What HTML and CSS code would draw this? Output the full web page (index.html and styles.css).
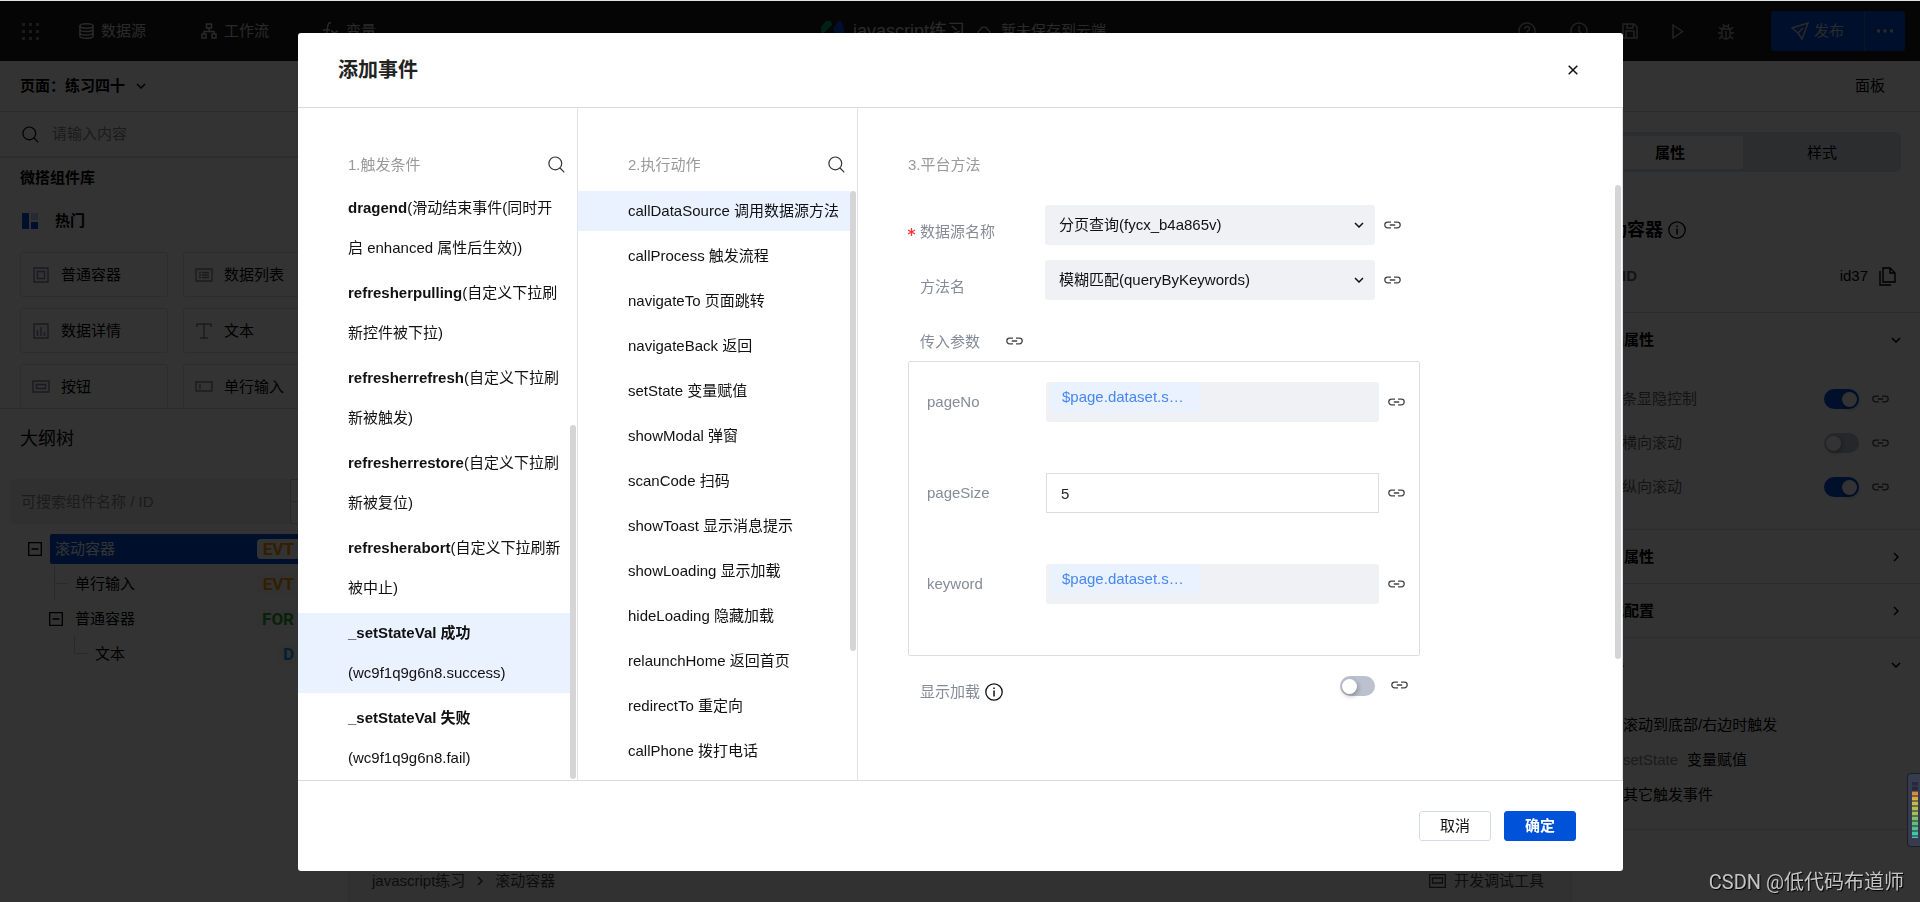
FILE: index.html
```html
<!DOCTYPE html>
<html lang="zh-CN">
<head>
<meta charset="utf-8">
<title>添加事件</title>
<link rel="stylesheet" href="styles.css">
</head>
<body>
<svg class="sprite" aria-hidden="true">
  <symbol id="link" viewBox="0 0 17 8"><path d="M7 1.200H3.600a2.800 2.800 0 0 0 0 5.600H7M10 1.200h3.400a2.800 2.800 0 0 1 0 5.600H10M5.800 4h5.400" fill="none" stroke="currentColor" stroke-width="1.300"/></symbol>
  <symbol id="search" viewBox="0 0 17 17"><path d="M7.3 1a6.4 6.4 0 1 0 0 12.800a6.4 6.4 0 0 0 0-12.800M12 12l4.300 4.300" fill="none" stroke="currentColor" stroke-width="1.2"/></symbol>
  <symbol id="down" viewBox="0 0 10 6"><path d="M1 1l4 4 4-4" fill="none" stroke="currentColor" stroke-width="1.5"/></symbol>
  <symbol id="right" viewBox="0 0 6 10"><path d="M1 1l4 4-4 4" fill="none" stroke="currentColor" stroke-width="1.5"/></symbol>
  <symbol id="info" viewBox="0 0 18 18"><circle cx="9" cy="9" r="8.200" fill="none" stroke="currentColor" stroke-width="1.300"/><path d="M8.300 4.500h1.500v1.500H8.300zM8.300 7.500h1.500v6H8.300z" fill="currentColor"/></symbol>
  <symbol id="minus" viewBox="0 0 14 14"><path d="M.7.7h12.600v12.600H.7zM3.500 7h7" fill="none" stroke="currentColor" stroke-width="1.300"/></symbol>
</svg>

<div class="app">
  <header class="topbar">
    <nav class="topnav">
      <a href="#" class="apps" aria-label="应用"><svg width="17" height="17" viewBox="0 0 17 17"><path d="M0 0h3v3H0zM7 0h3v3H7zM14 0h3v3h-3zM0 7h3v3H0zM7 7h3v3H7zM14 7h3v3h-3zM0 14h3v3H0zM7 14h3v3H7zM14 14h3v3h-3z" fill="currentColor"/></svg></a>
      <a href="#" class="nav-data"><svg width="15" height="16" viewBox="0 0 15 16"><g fill="none" stroke="currentColor" stroke-width="1.500"><ellipse cx="7.500" cy="3" rx="6.600" ry="2.200"/><path d="M.9 3v10c0 3 13.200 3 13.200 0V3M.9 6.300c0 3 13.200 3 13.200 0M.9 9.700c0 3 13.200 3 13.200 0"/></g></svg>数据源</a>
      <a href="#" class="nav-flow"><svg width="16" height="16" viewBox="0 0 16 16"><path d="M5.500 1h5v4h-5zM1 11h4v4H1zM11 11h4v4h-4zM8 5v3.500M3 11V8.500h10V11" fill="none" stroke="currentColor" stroke-width="1.500"/></svg>工作流</a>
      <a href="#" class="nav-var"><svg width="16" height="18" viewBox="0 0 16 18"><path d="M8 1C5 0 5 3 4.500 6S4 16 1 16M0 8h7M8 9c4 0 3 6 7 6M15 9c-3 0-4 6-7 6" fill="none" stroke="currentColor" stroke-width="1.400"/></svg>变量</a>
    </nav>
    <div class="project">
      <svg class="logo" width="23" height="20" viewBox="0 0 23 20"><path d="M0 6l5-6h5l1 4-9 9H0z" fill="#00a870"/><path d="M12 8l5-8h3l3 7v11h-5z" fill="#0052d9"/></svg>
      <span class="project-name">javascript练习</span>
      <svg width="16" height="12" viewBox="0 0 16 12"><path d="M4 11a3.200 3.200 0 0 1 0-6 4.200 4.200 0 0 1 8 0 3.200 3.200 0 0 1 0 6z" fill="none" stroke="currentColor" stroke-width="1.300"/></svg>
      <span>暂未保存到云端</span>
    </div>
    <div class="tools">
      <button aria-label="帮助"><svg width="18" height="18" viewBox="0 0 18 18"><circle cx="9" cy="9" r="8" fill="none" stroke="currentColor" stroke-width="1.400"/><path d="M6.500 7c0-3.300 5-3.300 5 0 0 1.600-2.500 1.600-2.500 3.500M9 12v1.500" fill="none" stroke="currentColor" stroke-width="1.400"/></svg></button>
      <button aria-label="历史"><svg width="18" height="18" viewBox="0 0 18 18"><circle cx="9" cy="9" r="8" fill="none" stroke="currentColor" stroke-width="1.400"/><path d="M9 4v5l3 3" fill="none" stroke="currentColor" stroke-width="1.400"/></svg></button>
      <button aria-label="保存"><svg width="16" height="16" viewBox="0 0 16 16"><path d="M1 1h11l3 3v11H1zM4 15V8h8v7M5 1v4h6V1" fill="none" stroke="currentColor" stroke-width="1.500"/></svg></button>
      <button aria-label="预览"><svg width="12" height="15" viewBox="0 0 12 15"><path d="M1 1l9.500 6.500L1 14z" fill="none" stroke="currentColor" stroke-width="1.500"/></svg></button>
      <button aria-label="调试"><svg width="16" height="17" viewBox="0 0 16 17"><path d="M4 6h8v6a4 4 0 0 1-8 0zM5 6a3 3 0 0 1 6 0M8 8v8M0 10h4M12 10h4M1 4l3 3M15 4l-3 3M1 16l3-3M15 16l-3-3M5 1l1 2M11 1l-1 2" fill="none" stroke="currentColor" stroke-width="1.400"/></svg></button>
      <div class="publish">
        <button class="publish-main"><svg width="18" height="18" viewBox="0 0 18 18"><path d="M1 6l16-5-6 16-4-6zM7 11l5-5" fill="none" stroke="currentColor" stroke-width="1.400"/></svg>发布</button>
        <button class="publish-more" aria-label="更多"><svg width="16" height="4" viewBox="0 0 16 4"><path d="M0 .5h3v3H0zM6.500.5h3v3h-3zM13 .5h3v3h-3z" fill="currentColor"/></svg></button>
      </div>
    </div>
  </header>

  <div class="workspace">
    <aside class="left">
      <button class="page-switch">页面：练习四十<svg width="10" height="6"><use href="#down"/></svg></button>
      <label class="lib-search"><svg width="17" height="17"><use href="#search"/></svg><input type="text" placeholder="请输入内容" aria-label="搜索组件"></label>
      <section class="library">
        <h2>微搭组件库</h2>
        <h3><svg width="16" height="16" viewBox="0 0 16 16"><path d="M0 0h7v16H0zM9 9h7v7H9z" fill="#0052d9"/><path d="M9 0h7v7H9z" fill="#bccdf5"/></svg>热门</h3>
        <div class="cards">
          <button><svg width="18" height="16" viewBox="0 0 18 16"><path d="M2 1h14v14H2zM5.500 4.500h7v7h-7z" fill="none" stroke="currentColor" stroke-width="1.400"/></svg>普通容器</button>
          <button><svg width="18" height="14" viewBox="0 0 18 14"><path d="M1 1h16v12H1zM4 4.500h2M7 4.500h7M4 7h2M7 7h7M4 9.500h2M7 9.500h7" fill="none" stroke="currentColor" stroke-width="1.300"/></svg>数据列表</button>
          <button><svg width="18" height="16" viewBox="0 0 18 16"><path d="M2 1h14v14H2zM5.500 7v6M9 4v9M12.500 9v4" fill="none" stroke="currentColor" stroke-width="1.400"/></svg>数据详情</button>
          <button><svg width="18" height="16" viewBox="0 0 18 16"><path d="M2 4V1h14v3M9 1v14M5 15h8" fill="none" stroke="currentColor" stroke-width="1.400"/></svg>文本</button>
          <button><svg width="18" height="13" viewBox="0 0 18 13"><path d="M1 1h16v11H1zM4.500 4.500h9v4h-9z" fill="none" stroke="currentColor" stroke-width="1.400"/></svg>按钮</button>
          <button><svg width="18" height="11" viewBox="0 0 18 11"><path d="M1 1h16v9H1zM5 3v5" fill="none" stroke="currentColor" stroke-width="1.400"/></svg>单行输入</button>
        </div>
      </section>
      <section class="outline">
        <h2>大纲树</h2>
        <div class="outline-search"><input type="text" placeholder="可搜索组件名称 / ID" aria-label="搜索大纲"><span class="stepper"><button aria-label="上一个"></button><button aria-label="下一个"></button></span></div>
        <ul class="tree">
          <li class="lv1"><svg width="14" height="14"><use href="#minus"/></svg><span class="node active">滚动容器<b class="tag evt">EVT</b></span></li>
          <li class="lv2"><i class="branch through"></i><span class="node">单行输入<b class="tag evt">EVT</b></span></li>
          <li class="lv2 open"><svg width="14" height="14"><use href="#minus"/></svg><span class="node">普通容器<b class="tag for">FOR</b></span></li>
          <li class="lv3"><i class="branch"></i><span class="node">文本<b class="tag d">D</b></span></li>
        </ul>
      </section>
    </aside>

    <main class="canvas">
      <div class="canvas-bar"></div>
      <footer class="crumbs">
        <a href="#">javascript练习</a><svg width="6" height="10"><use href="#right"/></svg><a href="#">滚动容器</a>
        <button class="devtools"><svg width="17" height="14" viewBox="0 0 17 14"><path d="M.7.7h15.600v12.600H.7zM3.500 4h10v5h-10z" fill="none" stroke="currentColor" stroke-width="1.300"/></svg>开发调试工具</button>
      </footer>
    </main>

    <aside class="right">
      <div class="panel-bar"><button>面板</button></div>
      <div class="tabs"><button class="on">属性</button><button>样式</button></div>
      <h2>滚动容器<svg width="18" height="18"><use href="#info"/></svg></h2>
      <div class="idrow"><b>组件ID</b><span>id37</span><svg width="17" height="19" viewBox="0 0 17 19"><path d="M4 1h7l5 5v9H4zM11 1v5h5M1 4v14h11" fill="none" stroke="currentColor" stroke-width="1.400"/></svg></div>
      <section class="props">
        <h3>基础属性<svg width="10" height="6"><use href="#down"/></svg></h3>
        <div class="prop"><label for="p1">滚动条显隐控制</label><input id="p1" class="switch" type="checkbox" checked><svg width="17" height="8"><use href="#link"/></svg></div>
        <div class="prop"><label for="p2">允许横向滚动</label><input id="p2" class="switch" type="checkbox"><svg width="17" height="8"><use href="#link"/></svg></div>
        <div class="prop"><label for="p3">允许纵向滚动</label><input id="p3" class="switch" type="checkbox" checked><svg width="17" height="8"><use href="#link"/></svg></div>
      </section>
      <section><h3>通用属性<svg width="6" height="10"><use href="#right"/></svg></h3></section>
      <section><h3>样式配置<svg width="6" height="10"><use href="#right"/></svg></h3></section>
      <section class="events">
        <h3>事件<svg width="10" height="6"><use href="#down"/></svg></h3>
        <p>滚动到底部/右边时触发</p>
        <p><span>setState</span>变量赋值</p>
        <p>其它触发事件</p>
      </section>
    </aside>
  </div>
</div>

<div class="overlay">
  <div class="modal" role="dialog" aria-labelledby="title">
    <header class="modal-head">
      <h1 id="title">添加事件</h1>
      <button class="close" aria-label="关闭"><svg width="10" height="10" viewBox="0 0 10 10"><path d="M.7.7l8.600 8.600M9.300.7L.7 9.300" stroke="currentColor" stroke-width="1.500"/></svg></button>
    </header>
    <div class="modal-body">
      <section class="col triggers">
        <h2>1.触发条件<button aria-label="搜索"><svg width="17" height="17"><use href="#search"/></svg></button></h2>
        <ul>
          <li><b>dragend</b>(滑动结束事件(同时开启 enhanced 属性后生效))</li>
          <li><b>refresherpulling</b>(自定义下拉刷新控件被下拉)</li>
          <li><b>refresherrefresh</b>(自定义下拉刷新被触发)</li>
          <li><b>refresherrestore</b>(自定义下拉刷新被复位)</li>
          <li><b>refresherabort</b>(自定义下拉刷新被中止)</li>
          <li class="sel"><b>_setStateVal 成功</b><br>(wc9f1q9g6n8.success)</li>
          <li><b>_setStateVal 失败</b><br>(wc9f1q9g6n8.fail)</li>
        </ul>
        <i class="thumb"></i>
      </section>
      <section class="col actions">
        <h2>2.执行动作<button aria-label="搜索"><svg width="17" height="17"><use href="#search"/></svg></button></h2>
        <ul>
          <li class="sel">callDataSource 调用数据源方法</li>
          <li>callProcess 触发流程</li>
          <li>navigateTo 页面跳转</li>
          <li>navigateBack 返回</li>
          <li>setState 变量赋值</li>
          <li>showModal 弹窗</li>
          <li>scanCode 扫码</li>
          <li>showToast 显示消息提示</li>
          <li>showLoading 显示加载</li>
          <li>hideLoading 隐藏加载</li>
          <li>relaunchHome 返回首页</li>
          <li>redirectTo 重定向</li>
          <li>callPhone 拨打电话</li>
        </ul>
        <i class="thumb"></i>
      </section>
      <section class="col method">
        <h2>3.平台方法</h2>
        <form>
          <div class="row">
            <label class="req" for="source"><svg width="7" height="8" viewBox="0 0 7 8"><path d="M3.500 0v8M0 2l7 4M7 2L0 6" stroke="currentColor" stroke-width="1.200"/></svg>数据源名称</label>
            <span class="select"><select id="source"><option>分页查询(fycx_b4a865v)</option></select><svg width="10" height="6"><use href="#down"/></svg></span>
            <svg class="bind" width="17" height="8"><use href="#link"/></svg>
          </div>
          <div class="row">
            <label for="method">方法名</label>
            <span class="select"><select id="method"><option>模糊匹配(queryByKeywords)</option></select><svg width="10" height="6"><use href="#down"/></svg></span>
            <svg class="bind" width="17" height="8"><use href="#link"/></svg>
          </div>
          <div class="row params-head"><span class="label">传入参数</span><svg width="17" height="8"><use href="#link"/></svg></div>
          <div class="params">
            <div class="param"><span>pageNo</span><div class="bound"><a href="#">$page.dataset.s…</a></div><svg width="17" height="8"><use href="#link"/></svg></div>
            <div class="param"><label for="size">pageSize</label><input id="size" type="text" value="5"><svg width="17" height="8"><use href="#link"/></svg></div>
            <div class="param"><span>keyword</span><div class="bound"><a href="#">$page.dataset.s…</a></div><svg width="17" height="8"><use href="#link"/></svg></div>
          </div>
          <div class="row loading"><label for="load">显示加载<svg width="18" height="18"><use href="#info"/></svg></label><input id="load" class="switch" type="checkbox"><svg class="bind" width="17" height="8"><use href="#link"/></svg></div>
        </form>
        <i class="thumb"></i>
      </section>
    </div>
    <footer class="modal-foot"><button>取消</button><button class="primary">确定</button></footer>
  </div>
</div>
<div class="meter"><i></i></div>
<div class="watermark">CSDN @低代码布道师</div>
</body>
</html>
```

FILE: styles.css
```css
* { box-sizing: border-box; }
html, body { height: 100%; }
body {
  margin: 0;
  overflow: hidden;
  background: #fff;
  color: #000;
  font: 15px/20px "Liberation Sans", "Noto Sans CJK SC", sans-serif;
}
h1, h2, h3, p, ul { margin: 0; padding: 0; font-size: 15px; }
ul { list-style: none; }
a { color: inherit; text-decoration: none; }
button, input, select { font: inherit; color: inherit; border: 0; background: none; padding: 0; margin: 0; }
svg { flex: none; display: block; }
.sprite { position: absolute; width: 0; height: 0; }

.app { height: 100%; display: flex; flex-direction: column; border-top: 1px solid #dfe3e1; }

/* top bar */
.topbar { height: 60px; flex: none; display: flex; align-items: center; background: #191919; color: #d0d0d0; padding: 0 15px 0 22px; }
.topnav { display: flex; align-items: center; flex: 1 1 0; }
.topnav a { display: flex; align-items: center; gap: 7px; }
.topnav .apps { color: #888; margin-right: 40px; }
.topnav .nav-data { margin-right: 55px; }
.topnav .nav-flow { margin-right: 54px; }
.project { display: flex; align-items: center; gap: 9px; }
.project-name { font-size: 18px; margin-right: 2px; }
.tools { flex: 1 1 0; display: flex; align-items: center; justify-content: flex-end; gap: 34px; color: #aaa; }
.publish { display: flex; height: 40px; background: #0052d9; border-radius: 3px; margin-left: 3px; color: #d0d0d0; }
.publish-main { width: 94px; display: flex; align-items: center; justify-content: center; gap: 5px; border-right: 1px solid #2b6de0; }
.publish-more { width: 40px; display: flex; align-items: center; justify-content: center; }

.workspace { flex: 1; min-height: 0; display: flex; }

/* left panel */
.left { width: 349px; flex: none; border-right: 1px solid #e7e7e7; display: flex; flex-direction: column; }
.page-switch { height: 51px; border-bottom: 1px solid #ddd; padding: 0 20px; display: flex; align-items: center; gap: 11px; font-weight: bold; }
.lib-search { height: 46px; border-bottom: 2px solid #e0e0e0; display: flex; align-items: center; gap: 13px; padding: 0 22px; }
.lib-search input { flex: 1; }
input::placeholder { color: #888; opacity: 1; }
.library { height: 251px; overflow: hidden; padding: 10px 16px 0 20px; border-bottom: 1px solid #ddd; }
.library h2 { line-height: 20px; }
.library h3 { display: flex; align-items: center; gap: 17px; margin: 23px 0 21px 2px; }
.cards { display: grid; grid-template-columns: 148px 148px; gap: 11px 15px; }
.cards button { height: 45px; border: 1px solid #e0e0e0; border-radius: 3px; display: flex; align-items: center; gap: 11px; padding-left: 11px; }
.cards svg { color: #889; }
.outline h2 { font-size: 18px; font-weight: normal; padding: 20px 20px 30px; }
.outline-search { display: flex; height: 45px; margin-left: 10px; margin-bottom: 7px; }
.outline-search input { flex: 1; background: #f0f1f5; border-radius: 4px; padding: 0 11px; }
.stepper { display: grid; width: 58px; border: 1px solid #ccc; }
.stepper button + button { border-top: 1px solid #ccc; }
.tree li { height: 35px; display: flex; align-items: center; position: relative; }
.tree .lv1 { padding-left: 28px; gap: 8px; }
.tree .lv2 { padding-left: 70px; }
.tree .lv2.open { padding-left: 49px; gap: 7px; }
.tree .lv3 { padding-left: 90px; }
.node { flex: 1; height: 30px; display: flex; align-items: center; justify-content: space-between; padding: 0 48px 0 5px; }
.node.active { background: #0052d9; color: #fff; border-radius: 2px; }
.tag { font: bold 17px/20px Roboto, sans-serif; padding: 0 6px; border-radius: 4px; background: #f8f8f8; }
.active .tag { background: #fff; }
.evt { color: #ff9600; }
.for { color: #26a53a; }
.d { color: #009ee8; }
.branch { position: absolute; left: 54px; top: 0; width: 14px; height: 18px; border: solid #ccc; border-width: 0 0 1px 1px; }
.through::after { content: ""; position: absolute; left: -1px; top: 17px; height: 18px; border-left: 1px solid #ccc; }
.lv3 .branch { left: 74px; }

/* canvas */
.canvas { flex: 1; display: flex; flex-direction: column; background: #f3f3f3; }
.canvas-bar { height: 51px; background: #fff; border-bottom: 1px solid #ddd; }
.crumbs { margin-top: auto; height: 42px; display: flex; align-items: center; gap: 12px; padding: 0 27px 0 23px; color: #444; background: #f4f4f4; }
.devtools { margin-left: auto; display: flex; align-items: center; gap: 8px; }

/* right panel */
.right { width: 349px; flex: none; border-left: 1px solid #e7e7e7; }
.panel-bar { height: 51px; border-bottom: 1px solid #ddd; padding-right: 35px; display: flex; justify-content: flex-end; }
.tabs { display: grid; grid-template-columns: 146px 1fr; height: 40px; margin: 20px 19px 0 21px; padding: 4px 0 3px 4px; background: #dce1e7; border-radius: 6px; }
.tabs .on { background: #fff; font-weight: bold; border-radius: 3px; }
.right h2 { font-size: 18px; display: flex; align-items: center; gap: 5px; padding: 48px 0 26px 19px; }
.idrow { display: flex; align-items: center; gap: 11px; padding: 0 24px 26px 20px; }
.idrow b { color: #666; flex: 1; }
.right section { border-top: 1px solid #ddd; }
.right h3 { height: 53px; display: flex; align-items: center; justify-content: space-between; padding: 0 19px 0 22px; }
.right h3 svg[width="6"] { margin-right: 2px; }
.right .props { padding-bottom: 20px; }
.prop { height: 44px; display: flex; align-items: center; padding: 0 31px 0 20px; color: #666; }
.right .props h3 { margin-bottom: 11px; }
.prop label { flex: 1; }
.prop svg { margin-left: 13px; color: #444; }
.right .events { border-bottom: 1px solid #ddd; padding-bottom: 17px; }
.right .events h3 { margin-bottom: 16px; }
.events p { line-height: 35px; padding-left: 51px; }
.events span { color: #888; margin-right: 9px; }

.switch { appearance: none; width: 35px; height: 20px; border-radius: 10px; background: #bbc1cf; display: flex; align-items: center; padding: 0 2px; }
.switch::before { content: ""; width: 15px; height: 15px; border-radius: 50%; background: #fff; box-shadow: 1px 2px 5px rgba(0, 0, 0, .3); }
.switch:checked { background: #0052d9; justify-content: flex-end; }

/* dialog */
.overlay { position: fixed; inset: 1px 0 0; background: rgba(0, 0, 0, .8); padding: 32px 297px 31px 298px; display: flex; }
.modal { flex: 1; display: flex; flex-direction: column; background: #fff; border-radius: 3px; color: #111; min-width: 0; }
.modal-head { height: 75px; flex: none; border-bottom: 1px solid #d8dae3; display: flex; justify-content: space-between; padding: 27px 45px 0 40px; }
.modal-head h1 { font-size: 20px; line-height: 20px; color: #222; }
.close { height: 20px; }
.modal-body { flex: 1; min-height: 0; display: flex; }
.col { position: relative; width: 280px; border-right: 1px solid #e2e3e8; padding-top: 37px; overflow: hidden; flex: none; }
.col h2 { font-weight: normal; line-height: 40px; color: #999; display: flex; justify-content: space-between; padding: 0 12px 0 50px; }
.col h2 button { color: #333; height: 38px; }
.triggers ul { margin-top: 3px; }
.actions ul { margin-top: 6px; }
.col li { line-height: 40px; margin: 0 7px 5px 0; padding-left: 50px; }
.triggers li { padding-right: 8px; }
.actions li { white-space: nowrap; }
.sel { background: #ebf2ff; }
.thumb { position: absolute; right: 1px; width: 6px; border-radius: 3px; background: #d5d5d5; }
.triggers .thumb { top: 317px; bottom: 1px; }
.actions .thumb { top: 83px; height: 460px; }
.method .thumb { top: 77px; height: 474px; }
.col.method { flex: 1; border-right-color: #dde0e8; }
form { padding: 20px 60px 0 50px; color: #858b98; }
.row { height: 55px; display: flex; align-items: flex-start; max-width: 512px; }
.row label, .row .label { width: 137px; line-height: 40px; margin-top: 7px; padding-left: 12px; }
.row .req { padding-left: 0; display: flex; align-items: center; gap: 5px; }
.select { position: relative; width: 330px; height: 40px; }
.select select { appearance: none; width: 100%; height: 40px; background: #f0f1f5; border-radius: 3px; padding: 0 14px; color: #111; }
form svg { color: #444; }
.select svg { position: absolute; right: 11px; top: 17px; color: #111; pointer-events: none; }
.req svg { color: #f33; }
.bind { margin: 16px 0 0 9px; }
.row.params-head { height: 46px; }
.params-head .label { width: 98px; }
.params-head svg { margin-top: 22px; }
.params { max-width: 512px; border: 1px solid #ddd; border-radius: 2px; padding: 20px 14px 51px 18px; display: grid; gap: 51px; }
.param { display: flex; align-items: center; height: 40px; }
.param > :first-child { width: 119px; }
.param > svg { margin-left: 9px; }
.param input, .bound { flex: 1; min-width: 0; height: 40px; }
.param input { border: 1px solid #dcdcdc; padding: 0 14px; color: #222; }
.bound { background: #f0f1f5; border-radius: 3px; padding-left: 5px; }
.bound a { display: block; width: 149px; line-height: 30px; padding-left: 11px; background: #ebf2ff; color: #4787f0; }
.row.loading { margin-top: 9px; }
.row.loading label { width: auto; flex: 1; display: flex; align-items: center; gap: 5px; }
.loading label svg { color: #111; }
.loading .switch { margin-top: 11px; }
.loading .bind { margin: 16px 12px 0 16px; }
.modal-foot { height: 91px; flex: none; border-top: 1px solid #d8dbe5; display: flex; justify-content: flex-end; gap: 13px; padding: 30px 47px 0; }
.modal-foot button { width: 72px; height: 30px; border: 1px solid #d5d9e8; border-radius: 3px; }
.modal-foot .primary { background: #0052d9; border-color: #0052d9; color: #fff; font-weight: bold; }

/* floating items */
.meter { position: fixed; right: 0; top: 773px; width: 13px; height: 74px; border: 1px solid #1c1e2a; border-right: 0; border-radius: 4px 0 0 4px; background: #363b4d; padding: 8px 2px 8px 4px; }
.meter i { display: block; height: 100%; background: repeating-linear-gradient(transparent 0 3px, rgba(54, 59, 77, .6) 3px 5px), linear-gradient(#23283a 0 16%, #e07a40 17%, #d8b840 32%, #a8c050 55%, #50c080 78%, #40c8b8); }
.watermark { position: fixed; right: 16px; bottom: 6px; font: 20px/28px Roboto, "Noto Sans CJK SC", sans-serif; color: #c4c4c4; text-shadow: 1px 1px 1px #000; }
```
